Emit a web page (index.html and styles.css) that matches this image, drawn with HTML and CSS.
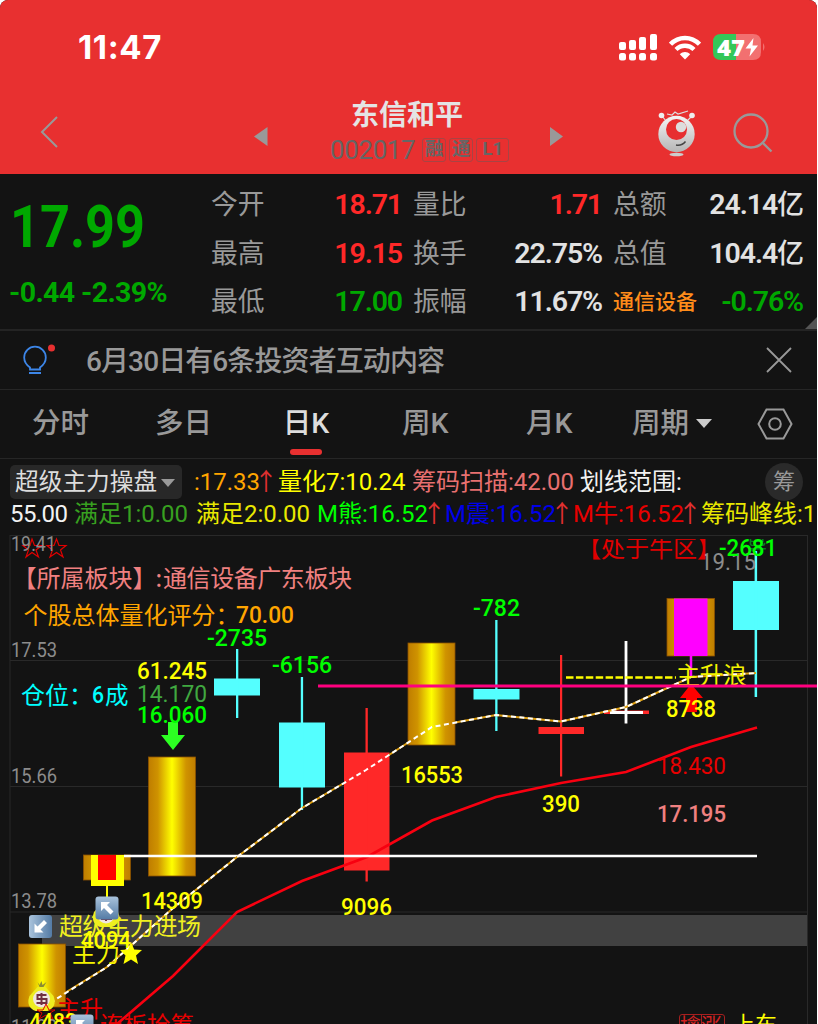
FILE: index.html
```html
<!DOCTYPE html>
<html lang="zh-CN">

<head>
    <meta charset="UTF-8">
    <meta name="viewport" content="width=device-width, initial-scale=1.0">
    <title>东信和平 002017</title>
    <link rel="stylesheet" href="styles.css">
</head>

<body>
    <div class="app">
        <header class="header">
            <div class="status">
                <span class="time">11:47</span>
                <div class="statusIcons">
                    <svg width="38" height="27" viewBox="0 0 38 27" fill="#fff">
                        <rect x="0" y="8" width="7" height="8" rx="2" />
                        <rect x="10" y="6" width="7" height="10" rx="2" />
                        <rect x="20" y="3" width="7" height="13" rx="2" />
                        <rect x="31" y="0" width="7" height="16" rx="2" />
                        <rect x="0" y="19" width="7" height="7.5" rx="2.5" />
                        <rect x="10" y="19" width="7" height="7.5" rx="2.5" />
                        <rect x="20" y="19" width="7" height="7.5" rx="2.5" />
                        <rect x="31" y="19" width="7" height="7.5" rx="2.5" />
                    </svg>
                    <svg class="wifi" width="32" height="25" viewBox="0 0 32 25" fill="none" stroke="#fff">
                        <path d="M1.5 9.2C9.5 .8 22.500 .8 30.500 9.200" stroke-width="4.500" />
                        <path d="M7 14.500C12 9.500 20 9.500 25 14.500" stroke-width="4.300" />
                        <path d="M16 24.500L10.800 19.300C13.800 16.300 18.200 16.300 21.200 19.300Z" fill="#fff" stroke="none" />
                    </svg>
                    <svg width="53" height="27" viewBox="0 0 53 27">
                        <path d="M8 0H23V26H8Q0 26 0 18V8Q0 0 8 0Z" fill="#34c759" />
                        <path d="M23 0H40Q48 0 48 8V18Q48 26 40 26H23Z" fill="#f27070" />
                        <path d="M50 9Q53 13 50 17Z" fill="#f27070" />
                        <text class="battery" x="4" y="21.500" textLength="28" lengthAdjust="spacingAndGlyphs">47</text>
                        <path d="M40.500 4L32.500 14.500H38L36.500 22.500L45 11.500H39.500Z" fill="#fff" />
                    </svg>
                </div>
            </div>
            <div class="nav">
                <svg class="back" width="18" height="32" viewBox="0 0 18 32" fill="none" stroke="#999" stroke-width="2">
                    <path d="M17 1L2 16L17 31" />
                </svg>
                <svg class="prev" width="14" height="20" viewBox="0 0 14 20">
                    <path d="M13.500 0V19L0 9.500Z" fill="#999" />
                </svg>
                <div class="stock">
                    <h1>东信和平</h1>
                    <div class="code">
                        <span class="num">002017</span>
                        <i>融</i><i>通</i><i class="wide">L1</i>
                    </div>
                </div>
                <svg class="next" width="14" height="20" viewBox="0 0 14 20">
                    <path d="M0 0V19L13 9.500Z" fill="#999" />
                </svg>
                <svg class="robot" width="38" height="47" viewBox="0 0 38 47">
                    <defs>
                        <linearGradient id="ball" x1="0" y1="0" x2="0" y2="1">
                            <stop offset="0" stop-color="#f5f5f5" />
                            <stop offset="1" stop-color="#b5b5b5" />
                        </linearGradient>
                    </defs>
                    <path d="M9 4L14 5L17 2L20 4L30 1M4 6L8 11M34 6L29 11" fill="none" stroke="#ddd" stroke-width="1.200" />
                    <circle cx="3.500" cy="5.500" r="2.800" fill="#eee" />
                    <circle cx="34" cy="5.500" r="2.800" fill="#eee" />
                    <circle cx="18.500" cy="24" r="18.200" fill="url(#ball)" />
                    <circle cx="18.500" cy="19.500" r="10.500" fill="#e72f30" />
                    <circle cx="23" cy="17" r="5.200" fill="#ddd" />
                    <path d="M18 35Q24 36 27.500 31.500" fill="none" stroke="#444" stroke-width="1.500" />
                    <ellipse cx="18.500" cy="44.500" rx="7" ry="1.700" fill="#ccc" />
                </svg>
                <svg class="search" width="40" height="40" viewBox="0 0 40 40" fill="none" stroke="#999" stroke-width="2.300">
                    <circle cx="18" cy="18" r="16.500" />
                    <path d="M29.500 29.500L38.500 38.500" />
                </svg>
            </div>
        </header>

        <section class="quote">
            <div class="price">
                <div class="last">17.99</div>
                <div class="change">-0.44 -2.39%</div>
            </div>
            <div class="stats">
                <div class="stat"><span>今开</span><b class="up">18.71</b></div>
                <div class="stat"><span>量比</span><b class="up">1.71</b></div>
                <div class="stat"><span>总额</span><b>24.14<small>亿</small></b></div>
                <div class="stat"><span>最高</span><b class="up">19.15</b></div>
                <div class="stat"><span>换手</span><b>22.75%</b></div>
                <div class="stat"><span>总值</span><b>104.4<small>亿</small></b></div>
                <div class="stat"><span>最低</span><b class="down">17.00</b></div>
                <div class="stat"><span>振幅</span><b>11.67%</b></div>
                <div class="stat"><span class="sector">通信设备</span><b class="down">-0.76%</b></div>
            </div>
            <i class="corner"></i>
        </section>

        <section class="notice">
            <svg class="bulb" width="34" height="32" viewBox="0 0 34 32" fill="none" stroke="#3d86e8" stroke-width="1.800">
                <path d="M7 25.500V23.500C3.500 21 1.200 17.500 1.200 13.500A10.800 10.800 0 0 1 22.800 13.500C22.800 17.500 20.500 21 17 23.500V25.500ZM6 29H18" />
                <circle cx="28.500" cy="4" r="3.500" fill="#e83030" stroke="none" />
            </svg>
            <p>6月30日有6条投资者互动内容</p>
            <svg width="26" height="26" viewBox="0 0 26 26" stroke="#999" stroke-width="1.800">
                <path d="M1 1L25 25M25 1L1 25" />
            </svg>
        </section>

        <nav class="tabs">
            <span>分时</span>
            <span>多日</span>
            <span class="active">日K</span>
            <span>周K</span>
            <span>月K</span>
            <span class="period">周期<i class="caret"></i></span>
            <svg width="36" height="32" viewBox="0 0 36 32" fill="none" stroke="#999" stroke-width="2">
                <path d="M9.500 1.500H26.500L34.500 16L26.500 30.500H9.500L1.500 16Z" />
                <circle cx="18" cy="16" r="5.800" />
            </svg>
        </nav>

        <section class="params">
            <div class="line">
                <span class="formula">超级主力操盘<i class="caret"></i></span>
                <span class="orange">:17.33<em>↑</em></span>
                <span class="yellow p1">量化7:10.24</span>
                <span class="pink p2">筹码扫描:42.00</span>
                <span class="white p3">划线范围:</span>
                <span class="chip">筹</span>
            </div>
            <div class="line second">
                <span class="white q1">55.00</span>
                <span class="green q2">满足1:0.00</span>
                <span class="gold q3">满足2:0.00</span>
                <span class="lime q4">M熊:16.52<em>↑</em></span>
                <span class="blue q4">M震:16.52<em>↑</em></span>
                <span class="red q4">M牛:16.52<em>↑</em></span>
                <span class="gold">筹码峰线:1</span>
            </div>
        </section>

        <svg class="chart" width="817" height="494" viewBox="0 530 817 494">
            <defs>
                <linearGradient id="goldBar">
                    <stop offset="0" stop-color="#bf7d00" />
                    <stop offset=".2" stop-color="#cf9300" />
                    <stop offset=".5" stop-color="#ffff00" />
                    <stop offset=".8" stop-color="#cf9300" />
                    <stop offset="1" stop-color="#bf7d00" />
                </linearGradient>
                <linearGradient id="key" x1="0" y1="0" x2="0" y2="1">
                    <stop offset="0" stop-color="#a9c3dc" />
                    <stop offset="1" stop-color="#547ba5" />
                </linearGradient>
                <clipPath id="plot">
                    <rect x="0" y="539" width="817" height="485" />
                </clipPath>
                <g id="bag">
                    <path d="M-4 -16L-2 -11H2L5 -16L1 -13L0 -17L-2 -13Z" fill="#8b8b35" />
                    <path d="M-4 -11H4L12 -2Q16 9 6 13H-6Q-16 9 -12 -2Z" fill="#eeee20" />
                    <circle r="8.500" cy="1" fill="#efe6e0" />
                    <path d="M5 -3H-4V1H5V5H-5M0 -5V7" fill="none" stroke="#703040" stroke-width="2" />
                </g>
                <g id="arrowKey">
                    <rect x="-11.500" y="-11.500" width="23" height="23" rx="3" fill="url(#key)" />
                    <path d="M-6 -6H3L0 -3L6.500 3.500L3.500 6.500L-3 0L-6 3Z" fill="#fff" />
                </g>
            </defs>

            <!-- grid -->
            <path class="grid" d="M10 535.500H807M10 660.500H807M10 786.500H807M10 912H807M10 535V1024M807.500 535V1024" />
            <rect x="42" y="915" width="765" height="31" fill="#414141" />

            <!-- candles -->
            <g fill="url(#goldBar)" stroke="#8c5200" stroke-width=".8">
                <rect x="18.500" y="944" width="47" height="63" />
                <rect x="83.500" y="855" width="47" height="25" />
                <rect x="148.500" y="757" width="47" height="119" />
                <rect x="408" y="643" width="47" height="102" />
                <rect x="667" y="598.500" width="47.500" height="57.500" />
            </g>
            <rect x="91" y="855" width="33" height="31" fill="#ff0" />
            <rect x="98" y="855" width="18" height="25" fill="#f00" />
            <path d="M107 886V897" stroke="#ff0" stroke-width="2" />
            <rect x="674" y="598.500" width="33.500" height="57.500" fill="#f0f" />
            <path d="M691 656V676" stroke="#f0f" stroke-width="2.500" />
            <g fill="#54ffff">
                <rect x="214" y="678.500" width="46" height="17" />
                <rect x="236" y="649" width="2.300" height="69" />
                <rect x="279" y="722.500" width="46" height="65" />
                <rect x="300.800" y="677" width="2.300" height="133" />
                <rect x="473.500" y="689" width="46" height="10.500" />
                <rect x="495.200" y="620" width="2.300" height="111" />
                <rect x="733" y="581" width="46" height="49" />
                <rect x="754.600" y="551" width="2.500" height="146" />
            </g>
            <g fill="#ff2828">
                <rect x="344" y="752.500" width="45.500" height="118" />
                <rect x="365.500" y="708" width="2.300" height="173.500" />
                <rect x="538.500" y="727" width="45.500" height="7" />
                <rect x="560" y="655" width="2.200" height="121.500" />
                <rect x="604" y="710.500" width="45" height="3.500" />
            </g>
            <path d="M626 641V723.500M610 712.500H643" stroke="#fff" stroke-width="2.800" />

            <!-- lines -->
            <polyline points="110,1030 173,976 237,912 302,881 367,857 432,820.500 496,797 561,783 626,772 691,747 757,727.500" fill="none" stroke="#f80010" stroke-width="2.600" />
            <path d="M566 677.500H676" stroke="#ff0" stroke-width="2.600" stroke-dasharray="7.500 2.400" />
            <path d="M124 856H757" stroke="#fff" stroke-width="2.600" />
            <polyline points="63,994 107,967 172,909 237,857 302,808 344,783" fill="none" stroke="#dfa010" stroke-width="2" />
            <polyline points="389,755 409,742" fill="none" stroke="#dfa010" stroke-width="2" />
            <polyline points="455,722.500 496,715 561,721.500 626,707 691,677 756,673" fill="none" stroke="#dfa010" stroke-width="2" />
            <polyline points="50,1003 107,967 172,909 237,857 302,808 366,770 432,727 496,715 561,721.500 626,707 691,677 756,673" fill="none" stroke="#fff" stroke-width="2" stroke-dasharray="5 3.500" />

            <!-- arrows -->
            <path d="M168 722H178V735H185L173 750L161 735H168Z" fill="#2cff22" />
            <path d="M691 684L703 698H697V712H686V698H680Z" fill="#f00" />

            <!-- price scale, drawn over the stars -->
            <path d="M32 539L34.500 545.500H42L36 550L38.500 557L32 552.500L26 557L28.500 550L23 545.500H30ZM56.500 539L59 545.500H66L60.500 550L63 557L56.500 552.500L50 557L52.500 550L47 545.500H54Z" fill="none" stroke="#e00000" stroke-width="1.200" />
            <g class="scale">
                <text x="11" y="551" textLength="45" lengthAdjust="spacingAndGlyphs">19.41</text>
                <text x="11" y="657" textLength="46" lengthAdjust="spacingAndGlyphs">17.53</text>
                <text x="11" y="783" textLength="46" lengthAdjust="spacingAndGlyphs">15.66</text>
                <text x="11" y="908" textLength="46" lengthAdjust="spacingAndGlyphs">13.78</text>
                <text x="11" y="1034" textLength="46" lengthAdjust="spacingAndGlyphs">11.90</text>
                <text class="high" x="700" y="570" textLength="56" lengthAdjust="spacingAndGlyphs">19.15</text>
            </g>

            <!-- texts of the formula -->
            <g class="label">
                <g clip-path="url(#plot)">
                    <text x="577" y="557" fill="#e00000">【处于牛区】</text>
                    <text x="747" y="554" font-size="20" fill="#087c20">导</text>
                    <text x="719" y="555.500" fill="#00ff00" class="digits" textLength="58" lengthAdjust="spacingAndGlyphs">-2681</text>
                </g>
                <text x="12.500" y="587" fill="#f08080">【所属板块】</text>
                <text x="155.500" y="587" fill="#f08080">:</text>
                <text x="163" y="587" fill="#f08080" textLength="189">通信设备广东板块</text>
                <text x="23.500" y="623.500" fill="#ffa500">个股总体量化评分：</text>
                <text x="21" y="703.500" fill="#00ffff">仓位：</text>
                <text x="105" y="703.500" fill="#00ffff" font-size="23.500">成</text>
                <text x="676" y="683.500" fill="#f2f200" textLength="71">主升浪</text>
                <text x="59" y="935" fill="#f0f020" textLength="142">超级主力进场</text>
                <text x="72" y="962" fill="#f2f200" textLength="48">主力</text>
                <text x="57" y="1017" fill="#e80000" font-size="23">主升</text>
                <text x="100" y="1034" fill="#e80000" font-size="23.500">连板抢筹</text>
                <text x="733" y="1032" fill="#ffff00" font-size="22">上车</text>
            </g>
            <path d="M131 942L134.200 949.500L142 950L136 955.500L138 964L131 959.500L123.500 964L125.500 955.500L120 950L128 949.500Z" fill="#ffff00" />
            <g class="label tag">
                <text x="680" y="1033">擒涨</text>
                <path d="M679.500 1024V1017Q679.500 1014.500 682 1014.500H722Q724.500 1014.500 724.500 1017V1024M701.500 1014.500V1024" fill="none" stroke="#a52020" />
            </g>

            <g class="digits">
                <text x="236" y="623" fill="#ffa500" textLength="58" lengthAdjust="spacingAndGlyphs">70.00</text>
                <text x="92" y="703" fill="#00ffff" textLength="12" lengthAdjust="spacingAndGlyphs">6</text>
                <text x="137" y="678.500" fill="#ffff00" textLength="70" lengthAdjust="spacingAndGlyphs">61.245</text>
                <text class="thin" x="137" y="701.500" fill="#40a840" textLength="70" lengthAdjust="spacingAndGlyphs">14.170</text>
                <text x="137" y="722.500" fill="#00ff00" textLength="70" lengthAdjust="spacingAndGlyphs">16.060</text>
                <text class="thin" x="657" y="773.500" fill="#e80000" textLength="69" lengthAdjust="spacingAndGlyphs">18.430</text>
                <text x="657" y="821.500" fill="#f08080" textLength="69" lengthAdjust="spacingAndGlyphs">17.195</text>
                <g fill="#00ff00">
                    <text x="207" y="646" textLength="60" lengthAdjust="spacingAndGlyphs">-2735</text>
                    <text x="272" y="672.500" textLength="60" lengthAdjust="spacingAndGlyphs">-6156</text>
                    <text x="473" y="615.500" textLength="47" lengthAdjust="spacingAndGlyphs">-782</text>
                </g>
                <g fill="#ffff00">
                    <text x="141" y="909" textLength="62" lengthAdjust="spacingAndGlyphs">14309</text>
                    <text x="341" y="915" textLength="51" lengthAdjust="spacingAndGlyphs">9096</text>
                    <text x="401" y="783" textLength="62" lengthAdjust="spacingAndGlyphs">16553</text>
                    <text x="542" y="812" textLength="38" lengthAdjust="spacingAndGlyphs">390</text>
                    <text x="666" y="716.500" textLength="50" lengthAdjust="spacingAndGlyphs">8738</text>
                </g>
            </g>

            <use href="#bag" x="106" y="914" />
            <use href="#arrowKey" x="107" y="908" />
            <text class="digits" x="81" y="948" fill="#ffff00" textLength="50" lengthAdjust="spacingAndGlyphs">4094</text>
            <use href="#arrowKey" transform="translate(40.500 926.500) rotate(-90)" />
            <use href="#bag" x="41.500" y="998" />
            <path d="M46 1004L49 1010H55L50 1013L53 1019L46 1015L39 1019L42 1013L37 1010H43Z" fill="none" stroke="#e00000" />
            <text class="digits" x="29" y="1030" fill="#ffff00" textLength="48" lengthAdjust="spacingAndGlyphs">4483</text>
            <use href="#arrowKey" x="82" y="1026" />
            <path d="M318 686H817" stroke="#ff007f" stroke-width="3.200" />
        </svg>
    </div>
</body>

</html>
```
FILE: styles.css
```css
* {
    padding: 0;
    margin: 0;
    box-sizing: border-box;
}

body {
    background-color: #fff;
    font-family: Roboto, "Noto Sans CJK SC", sans-serif;
    color: #999;
}

i,
em {
    font-style: normal;
}

svg {
    flex: none;
    display: block;
}

.app {
    width: 817px;
    height: 1024px;
    overflow: hidden;
    background-color: #131313;
    border-radius: 8px 8px 0 0;
}

.header {
    height: 174px;
    background-color: #e83030;
}

.status {
    height: 92px;
    padding: 2px 51px 0 78px;
    display: flex;
    align-items: center;
    justify-content: space-between;
}

.time {
    font-family: Inter, sans-serif;
    font-size: 33px;
    font-weight: 700;
    letter-spacing: 0.6px;
    color: #fff;
}

.statusIcons {
    display: flex;
    align-items: center;
    gap: 12px;
}

.battery {
    font-family: "Open Sans", sans-serif;
    font-size: 23px;
    font-weight: 800;
    fill: #fff;
}

.nav {
    height: 82px;
    padding: 0 44px 0 40px;
    display: flex;
    align-items: center;
}

.back {
    margin-top: -2px;
}

.prev {
    margin: 8px 0 0 196px;
}

.stock {
    width: 182px;
    margin: -2px 38px 0 62px;
}

h1 {
    padding-left: 21px;
    color: #e4e4e4;
    font-size: 28px;
    line-height: 36px;
    font-weight: 700;
}

.code {
    height: 32px;
    display: flex;
    align-items: center;
    gap: 3px;
    color: #666;
}

.num {
    font-size: 26px;
    letter-spacing: -0.4px;
    margin: 0 4px 0 0;
}

.code i {
    width: 24px;
    height: 24px;
    flex: none;
    border: 1px solid #a84444;
    border-radius: 3px;
    font-size: 18.500px;
    font-weight: 700;
    line-height: 21px;
    text-align: center;
}

.code .wide {
    width: 33px;
}

.next {
    margin-top: 8px;
}

.robot {
    margin-left: 94px;
}

.search {
    margin-left: auto;
}

.quote {
    position: relative;
    height: 157px;
    padding-left: 10px;
    display: flex;
    border-bottom: 2px solid #242424;
}

.price {
    width: 201px;
    color: #00a800;
    font-weight: 700;
}

.last {
    height: 88px;
    padding-top: 16px;
    font-size: 60px;
    line-height: 74px;
    transform: scaleX(0.87);
    transform-origin: left;
}

.change {
    font-size: 28.500px;
    line-height: 62px;
    letter-spacing: -0.6px;
    margin-left: -1px;
    white-space: nowrap;
}

.stats {
    height: 151px;
    padding-top: 7px;
    display: grid;
    grid-template-columns: 192px 190px 191px;
    grid-template-rows: repeat(3, 48.500px);
    column-gap: 10px;
}

.stat {
    display: flex;
    align-items: center;
    justify-content: space-between;
    font-size: 26.800px;
    line-height: 40px;
}

.stat b {
    color: #e2e2e2;
    font-size: 28.500px;
    font-weight: 600;
    letter-spacing: -1.100px;
    margin-right: 1px;
}

.stat small {
    font-size: 27px;
    font-weight: 500;
}

.stat .up {
    color: #ff2828;
}

.stat .down {
    color: #00a800;
}

.stat .sector {
    color: #ff8c1a;
    font-size: 21px;
    font-weight: 500;
}

.corner {
    position: absolute;
    right: 0;
    bottom: 0;
    border: 6px solid transparent;
    border-right-color: #555;
    border-bottom-color: #555;
}

.notice {
    height: 59px;
    padding: 0 25px 0 23px;
    display: flex;
    align-items: center;
    border-bottom: 1px solid #262626;
}

.notice p {
    flex: 1;
    margin: 3px 0 0 29px;
    font-size: 28px;
    font-weight: 500;
    line-height: 40px;
    letter-spacing: -0.9px;
}

.tabs {
    height: 69px;
    padding-left: 32px;
    display: grid;
    grid-template-columns: 123px 127px 120px 124px 106px 125px auto;
    align-items: center;
    border-bottom: 1px solid #262626;
    font-size: 28.500px;
    font-weight: 500;
    line-height: 68px;
}

.tabs .active {
    width: 48px;
    height: 68px;
    color: #ddd;
    display: flex;
    flex-direction: column;
    align-items: center;
}

.active::after {
    content: "";
    width: 32px;
    height: 6px;
    margin-top: -9px;
    flex: none;
    border-radius: 3px;
    background-color: #e83030;
}

.caret {
    display: inline-block;
    border: 8px solid transparent;
    border-top: 9px solid #ccc;
    border-bottom: 0;
    vertical-align: 5px;
    margin-left: 7px;
}

.params {
    height: 71px;
    padding: 6px 0 0 10px;
    font-size: 24px;
    line-height: 30px;
    white-space: nowrap;
    overflow: hidden;
}

.line {
    height: 34px;
    display: flex;
    align-items: center;
}

.line span {
    flex: none;
}

.line em {
    display: inline-block;
    width: 12px;
    color: #e03030;
    text-indent: -6px;
}

.second {
    height: 30px;
}

.formula {
    width: 172px;
    height: 34px;
    margin-right: 12px;
    padding-left: 5px;
    line-height: 34px;
    border-radius: 5px;
    background-color: #282828;
    color: #ddd;
    font-size: 23.700px;
}

.formula .caret {
    margin-left: 4px;
    border-width: 8px 7px 0;
    border-top-color: #999;
    vertical-align: 3px;
}

.orange {
    width: 84px;
    color: #ffa500;
}

.p1 {
    width: 134px;
}

.p2 {
    width: 168px;
}

.p3 {
    width: 185px;
}

.chip {
    width: 38px;
    height: 38px;
    border-radius: 50%;
    background-color: #2a2a2a;
    font-size: 22px;
    line-height: 38px;
    text-align: center;
}

.q1 {
    width: 64px;
    letter-spacing: -0.6px;
}

.q2 {
    width: 122px;
}

.q3 {
    width: 121px;
}

.q4 {
    width: 128px;
}

.yellow {
    color: #ffff00;
}

.gold {
    color: #e8e800;
}

.pink {
    color: #e87070;
}

.white {
    color: #f2f2f2;
}

.green {
    color: #38a020;
}

.lime {
    color: #00ff00;
}

.blue {
    color: #0000e8;
}

.red {
    color: #e80000;
}

.grid {
    fill: none;
    stroke: #292929;
}

.label {
    font-family: "Noto Sans CJK SC", sans-serif;
    font-size: 24px;
    font-weight: 400;
}

.tag {
    font-size: 21px;
    fill: #d22222;
}

.digits {
    font-family: Roboto, sans-serif;
    font-size: 24px;
    font-weight: 500;
}

.digits .thin {
    font-weight: 400;
}

.scale {
    font-size: 20px;
    fill: #8c8c8c;
}

.scale .high {
    font-size: 23.500px;
}
```
